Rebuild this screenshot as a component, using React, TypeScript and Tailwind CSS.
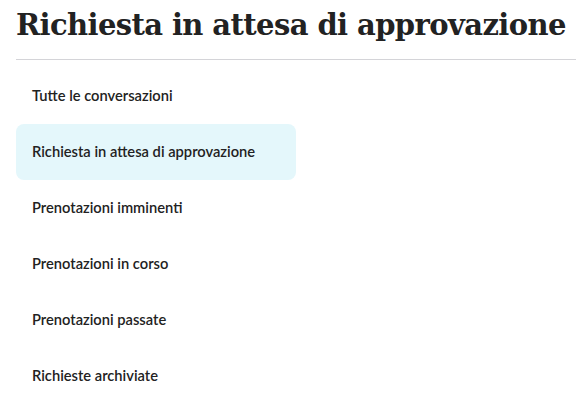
const items = [
  'Tutte le conversazioni',
  'Richiesta in attesa di approvazione',
  'Prenotazioni imminenti',
  'Prenotazioni in corso',
  'Prenotazioni passate',
  'Richieste archiviate',
]

const App = () => {
  const active = 1

  return (
    <div className="min-h-screen bg-white pl-4">
      <h1
        className="pt-[5px] text-[29px] font-bold leading-[40px] tracking-[-0.6px] text-[#222222]"
        style={{ fontFamily: '"DejaVu Serif", serif' }}
      >
        Richiesta in attesa di approvazione
      </h1>
      <div className="mt-[14px] h-px bg-[#d4d4d8]" />
      <nav className="mt-2 flex w-[280px] flex-col" style={{ fontFamily: 'Lato, sans-serif' }}>
        {items.map((label, i) => (
          <button
            key={label}
            type="button"
            className={
              i === active
                ? 'flex h-14 items-center rounded-lg bg-[#e4f7fb] px-4 pb-[2px] text-left text-[14.7px] font-semibold text-[#222222]'
                : 'flex h-14 items-center rounded-lg px-4 pb-[2px] text-left text-[14.7px] font-semibold text-[#222222]'
            }
          >
            {label}
          </button>
        ))}
      </nav>
    </div>
  )
}

export default App
